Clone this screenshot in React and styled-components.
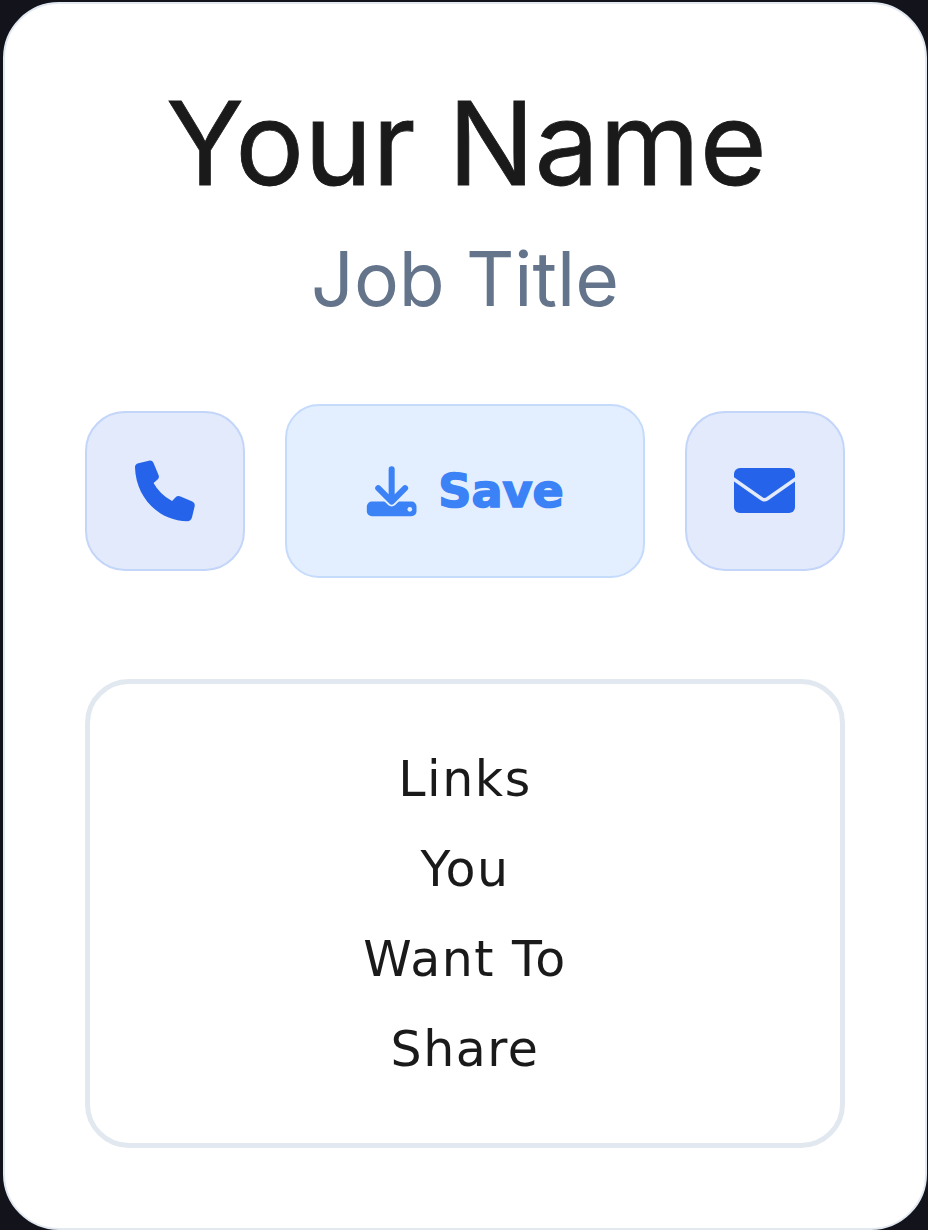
import styled, { createGlobalStyle } from "styled-components";

const GlobalStyle = createGlobalStyle`
    html, body {
        margin: 0;
        padding: 0;
        background-color: #12131b;
    }
    * {
        box-sizing: border-box;
    }
`

function PhoneIcon() {
    return (
        <svg width="62" height="62" viewBox="15 15 182 184">
            <path fill="#2563eb" d="M17 38 Q16 28 27 25 L58 17 Q68 15 72 24 L87 60 Q90 68 84 73 L72 83 Q90 116 127 137 L137 126 Q143 120 152 123 L187 138 Q196 142 194 152 L186 186 Q183 197 172 197 C85 195 20 125 17 38 Z" />
        </svg>
    );
}

function DownloadIcon() {
    return (
        <svg width="52" height="51" viewBox="20 16 154 152">
            <rect x="22" y="122" width="148" height="44" rx="15" fill="#3b82f6" />
            <path d="M56 82 L96 122 L136 82" fill="none" stroke="#e3eefe" strokeWidth="30" strokeLinejoin="round" />
            <path d="M96 26 L96 118 M56 82 L96 122 L136 82" fill="none" stroke="#3b82f6" strokeWidth="18" strokeLinecap="round" strokeLinejoin="round" />
            <circle cx="150" cy="145" r="7" fill="#e3eefe" />
        </svg>
    );
}

function MailIcon() {
    return (
        <svg width="61" height="45" viewBox="0 0 61 45">
            <rect width="61" height="45" rx="6" fill="#2563eb" />
            <path d="M-2 10 L28 31 Q30.5 32.5 33 31 L63 10" fill="none" stroke="#e2eafc" strokeWidth="3.4" />
        </svg>
    );
}

export default function App() {
    return (
        <>
            <GlobalStyle />
            <Page>
                <Card>
                    <Name>Your Name</Name>
                    <JobTitle>Job Title</JobTitle>
                    <Actions>
                        <IconButton><PhoneIcon /></IconButton>
                        <SaveButton>
                            <DownloadIcon />
                            <span>Save</span>
                        </SaveButton>
                        <IconButton><MailIcon /></IconButton>
                    </Actions>
                    <LinksBox>
                        <LinkItem>Links</LinkItem>
                        <LinkItem>You</LinkItem>
                        <LinkItem>Want To</LinkItem>
                        <LinkItem>Share</LinkItem>
                    </LinksBox>
                </Card>
            </Page>
        </>
    );
}

const Page = styled.div`
    width: 928px;
    height: 1230px;
    padding: 2px 1px 0 3px;
    overflow: hidden;
`

const Card = styled.div`
    display: flex;
    flex-direction: column;
    align-items: center;
    width: 924px;
    height: 1228px;
    padding-top: 69px;
    background-color: #ffffff;
    border: 2px solid #e2e8f0;
    border-radius: 56px;
`

const Name = styled.h1`
    margin: 0;
    padding-left: 3px;
    font-family: Inter, "Liberation Sans", sans-serif;
    font-size: 115px;
    font-weight: 400;
    line-height: 142px;
    color: #1a1a1a;
    -webkit-text-stroke: 0.8px #1a1a1a;
    paint-order: stroke fill;
`

const JobTitle = styled.h2`
    margin: 18px 0 0;
    font-family: Inter, "Liberation Sans", sans-serif;
    font-size: 75px;
    font-weight: 400;
    line-height: 92px;
    color: #64748b;
`

const Actions = styled.div`
    display: flex;
    align-items: center;
    justify-content: center;
    gap: 40px;
    width: 760px;
    margin-top: 79px;
`

const IconButton = styled.div`
    display: flex;
    align-items: center;
    justify-content: center;
    width: 160px;
    height: 160px;
    padding: 0 1px 1px 0;
    background-color: #e2eafc;
    border: 2px solid #c3d5f9;
    border-radius: 40px;
`

const SaveButton = styled.div`
    display: flex;
    align-items: center;
    justify-content: center;
    gap: 20px;
    width: 360px;
    height: 174px;
    background-color: #e3eefe;
    border: 2px solid #c5dbfc;
    border-radius: 34px;
    font-family: "DejaVu Sans", "Liberation Sans", sans-serif;
    font-size: 46px;
    font-weight: 700;
    color: #3b82f6;
    -webkit-text-stroke: 1.6px #3b82f6;
    paint-order: stroke fill;
`

const LinksBox = styled.div`
    display: flex;
    flex-direction: column;
    align-items: center;
    width: 760px;
    height: 469px;
    margin-top: 101px;
    padding-top: 51px;
    border: 5px solid #e2e8f0;
    border-radius: 44px;
`

const LinkItem = styled.div`
    font-family: "DejaVu Sans", "Liberation Sans", sans-serif;
    font-size: 49px;
    line-height: 90px;
    letter-spacing: 1.5px;
    color: #1a1a1a;
`
